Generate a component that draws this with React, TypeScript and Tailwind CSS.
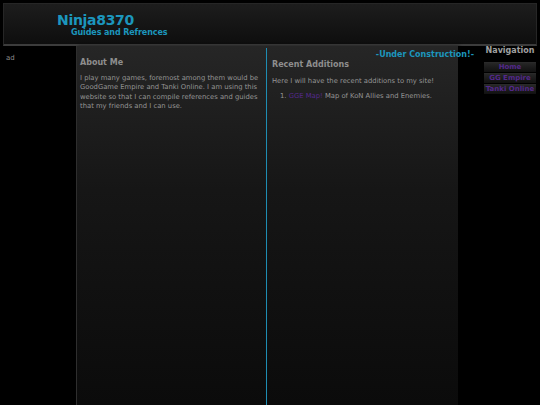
export default function App() {
  return (
    <div className="h-[405px] w-[540px] overflow-hidden bg-black flex flex-col font-['DejaVu_Sans',sans-serif]">
      {/* Header */}
      <div className="mx-[3px] mt-[3px] h-[43px] shrink-0 border border-[#262626] border-b-[2px] border-b-[#3c3c3c] bg-linear-to-b from-[#1d1d1d] to-[#0e0e0e] pl-[53px] pt-[8px]">
        <div className="text-[14px] font-bold leading-[16px] tracking-[-0.3px] text-[#1c96bd]">Ninja8370</div>
        <div className="ml-[14px] text-[8px] font-bold leading-[10px] tracking-[-0.1px] text-[#1c96bd]">Guides and Refrences</div>
      </div>

      {/* Body */}
      <div className="relative flex flex-1">
        <div className="w-[76px] shrink-0 pl-[6px] pt-[8px] text-[7px] leading-[9px] text-[#8a8a8a]">ad</div>

        <div className="flex w-[382px] shrink-0 border-l border-l-[#2e2e2e] bg-linear-to-b from-[#262626] via-[#161616] via-40% to-[#0b0b0b] shadow-[2px_0_3px_rgba(0,0,0,0.6)]">
          <div className="w-[189px] shrink-0 pl-[3px] pt-[12px]">
            <div className="text-[8px] font-bold leading-[10px] text-[#8e8e8e]">About Me</div>
            <p className="mt-[6px] text-[6.8px] leading-[9.4px] text-[#959595]">
              I play many games, foremost among them would be<br />
              GoodGame Empire and Tanki Online. I am using this<br />
              website so that I can compile references and guides<br />
              that my friends and I can use.
            </p>
          </div>
          <div className="mt-[2px] flex-1 border-l border-l-[#1e8db3] pl-[5px] pt-[12px]">
            <div className="text-[8px] font-bold leading-[10px] text-[#8e8e8e]">Recent Additions</div>
            <p className="mt-[7px] text-[6.8px] leading-[9px] text-[#959595]">Here I will have the recent additions to my site!</p>
            <ol className="mt-[6px] pl-[8px] text-[6.8px] leading-[9px] text-[#959595]">
              <li>
                1. <span className="text-[#55298c]">GGE Map!</span> Map of KoN Allies and Enemies.
              </li>
            </ol>
          </div>
        </div>

        <div className="ml-[26px] mt-0 w-[52px] shrink-0">
          <div className="text-center text-[8px] font-bold leading-[10px] text-[#a0a0a0]">Navigation</div>
          <div className="mt-[6px] flex flex-col gap-[1px]">
            {['Home', 'GG Empire', 'Tanki Online'].map((t) => (
              <div
                key={t}
                className="h-[10px] border-t border-t-[#2a2a2a] bg-linear-to-b from-[#262626] to-[#111111] text-center text-[7px] font-bold leading-[9px] text-[#53288a]"
              >
                {t}
              </div>
            ))}
          </div>
        </div>

        <div className="absolute right-[66px] top-[4px] text-[8px] font-bold leading-[10px] text-[#1c96bd]">-Under Construction!-</div>
      </div>
    </div>
  );
}
